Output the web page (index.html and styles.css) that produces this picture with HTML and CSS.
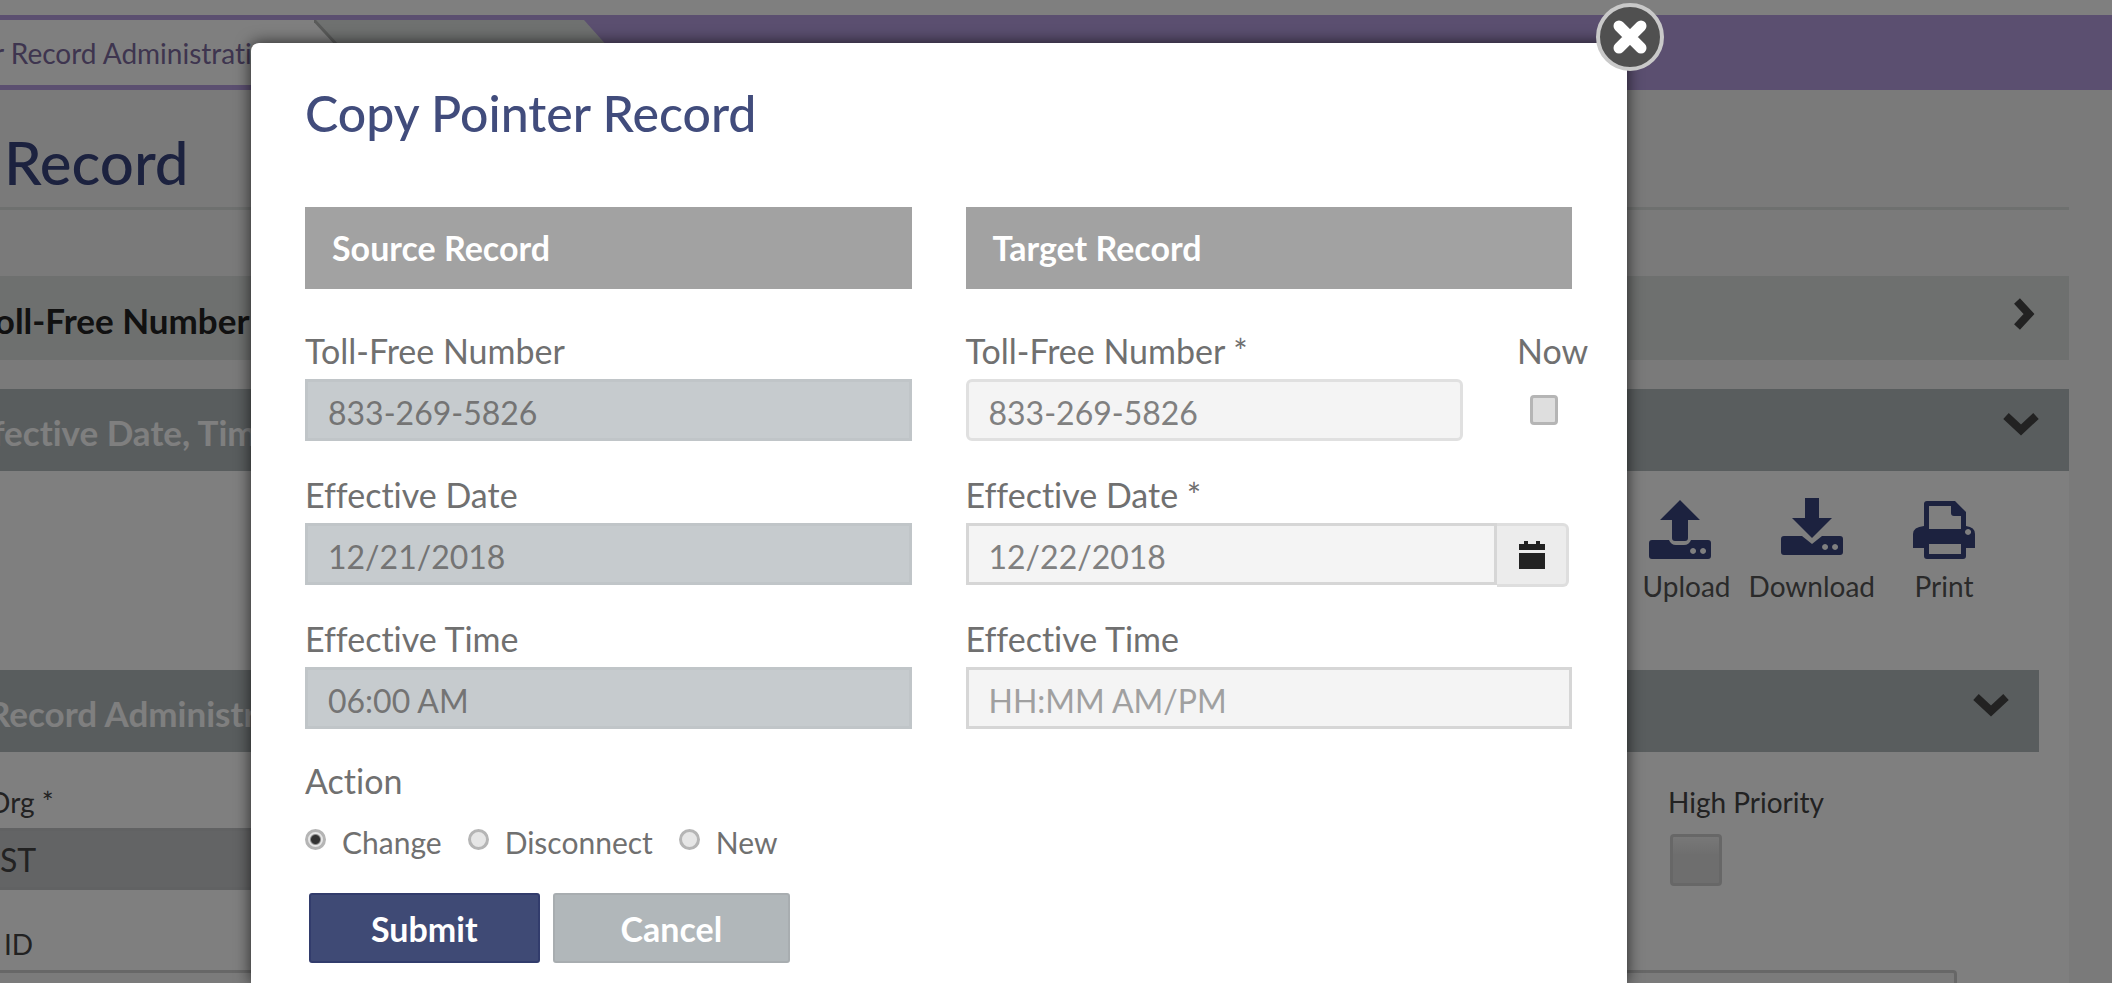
FILE: index.html
```html
<!DOCTYPE html>
<html lang="en">
<head>
<meta charset="utf-8">
<title>Copy Pointer Record</title>
<link rel="stylesheet" href="styles.css">
</head>
<body>
<div class="page">
  <nav class="tabs">
    <a class="tab" href="#">r Record Administration</a>
    <svg class="tab-next" viewBox="0 0 330 65" width="330" height="65" aria-hidden="true">
      <path d="M0 0H270L328 65H62Z" fill="#dfe3e1"/>
      <path d="M0 0L60 65" stroke="#b4b6b5" stroke-width="3"/>
    </svg>
  </nav>
  <main class="content">
    <h1 class="page-title">Record</h1>
    <section class="panel panel-light">
      <h2 class="panel-title">Toll-Free Number</h2>
      <svg class="chevron" viewBox="0 0 36 36" aria-hidden="true"><path d="M12 5L24 18L12 31" fill="none" stroke="currentColor" stroke-width="8"/></svg>
    </section>
    <section class="panel panel-dark">
      <h2 class="panel-title">Effective Date, Time</h2>
      <svg class="chevron" viewBox="0 0 36 36" aria-hidden="true"><path d="M3 11L18 25L33 11" fill="none" stroke="currentColor" stroke-width="8"/></svg>
    </section>
    <div class="panel-body">
      <div class="tools">
        <button class="tool tool-upload" type="button">
          <svg viewBox="0 0 62 62" width="62" height="62" aria-hidden="true"><path d="M31 2L51 22H39V40Q39 43 36 43H26Q23 43 23 40V22H11Z"/><path fill-rule="evenodd" d="M3 42H20Q22 47 27 47H35Q40 47 42 42H59Q62 42 62 45V58Q62 61 59 61H3Q0 61 0 58V45Q0 42 3 42ZM44 50a3 3 0 1 0 .1 0ZM54 50a3 3 0 1 0 .1 0Z"/></svg>
          <span>Upload</span>
        </button>
        <button class="tool" type="button">
          <svg viewBox="0 0 62 62" width="62" height="62" aria-hidden="true"><path d="M24 0H38V20H51L31 40L11 20H24Z"/><path fill-rule="evenodd" d="M3 38H21L31 46L41 38H59Q62 38 62 41V54Q62 57 59 57H3Q0 57 0 54V41Q0 38 3 38ZM44 46a3 3 0 1 0 .1 0ZM54 46a3 3 0 1 0 .1 0Z"/></svg>
          <span>Download</span>
        </button>
        <button class="tool" type="button">
          <svg viewBox="0 0 62 62" width="62" height="62" aria-hidden="true"><path fill-rule="evenodd" d="M14 3H42L53 14V28Q62 29 62 36V50H53V58Q53 61 50 61H14Q11 61 11 58V50H0V36Q0 29 11 28V6Q11 3 14 3ZM16 8V31H48V18H41Q38 18 38 15V8ZM16 46V56H48V46ZM55 31a3 3 0 1 0 .1 0Z"/></svg>
          <span>Print</span>
        </button>
      </div>
      <section class="panel panel-dark panel-nested">
        <h2 class="panel-title">Record Administration</h2>
        <svg class="chevron" viewBox="0 0 36 36" aria-hidden="true"><path d="M3 11L18 25L33 11" fill="none" stroke="currentColor" stroke-width="8"/></svg>
      </section>
      <div class="admin-row">
        <div class="admin-field">
          <label class="small-label" for="org">Org *</label>
          <input class="admin-input filled" id="org" type="text" value="ST" disabled>
        </div>
        <div class="priority">
          <label class="small-label" for="priority">High Priority</label>
          <input class="check check-large" id="priority" type="checkbox">
        </div>
      </div>
      <div class="admin-field wide">
        <label class="small-label id-label" for="recid">ID</label>
        <input class="admin-input" id="recid" type="text">
      </div>
    </div>
  </main>
</div>

<div class="overlay">
  <form class="dialog" role="dialog" aria-labelledby="dialog-title">
    <button class="close" type="button" aria-label="Close">
      <svg viewBox="0 0 36 36" width="36" height="36" aria-hidden="true"><path d="M7 7L29 29M29 7L7 29" stroke="#fff" stroke-width="11" stroke-linecap="round"/></svg>
    </button>
    <h2 class="dialog-title" id="dialog-title">Copy Pointer Record</h2>
    <div class="columns">
      <section class="column">
        <h3 class="column-title">Source Record</h3>
        <div class="field">
          <label for="s-num">Toll-Free Number</label>
          <input class="input locked" id="s-num" type="text" value="833-269-5826" disabled>
        </div>
        <div class="field">
          <label for="s-date">Effective Date</label>
          <input class="input locked" id="s-date" type="text" value="12/21/2018" disabled>
        </div>
        <div class="field">
          <label for="s-time">Effective Time</label>
          <input class="input locked" id="s-time" type="text" value="06:00 AM" disabled>
        </div>
      </section>
      <section class="column">
        <h3 class="column-title">Target Record</h3>
        <div class="number-row">
          <div class="field grow">
            <label for="t-num">Toll-Free Number *</label>
            <input class="input rounded" id="t-num" type="text" value="833-269-5826">
          </div>
          <div class="now">
            <label for="now">Now</label>
            <input class="check" id="now" type="checkbox">
          </div>
        </div>
        <div class="field">
          <label for="t-date">Effective Date *</label>
          <div class="date-group">
            <input class="input" id="t-date" type="text" value="12/22/2018">
            <button class="calendar" type="button" aria-label="Pick a date">
              <svg viewBox="0 0 26 28" width="26" height="28" aria-hidden="true"><path d="M0 3H5V0H9V3H17V0H21V3H26V9H0ZM0 12H26V28H0Z" fill="#222"/></svg>
            </button>
          </div>
        </div>
        <div class="field">
          <label for="t-time">Effective Time</label>
          <input class="input" id="t-time" type="text" placeholder="HH:MM AM/PM">
        </div>
      </section>
    </div>
    <fieldset class="action">
      <legend>Action</legend>
      <div class="options">
        <label class="option"><input class="radio" type="radio" name="action" checked>Change</label>
        <label class="option"><input class="radio" type="radio" name="action">Disconnect</label>
        <label class="option"><input class="radio" type="radio" name="action">New</label>
      </div>
    </fieldset>
    <div class="buttons">
      <button class="btn submit" type="submit">Submit</button>
      <button class="btn cancel" type="button">Cancel</button>
    </div>
  </form>
</div>
</body>
</html>
```

FILE: styles.css
```css
* {
  box-sizing: border-box;
}

html {
  overflow: hidden;
}

body {
  margin: 0;
  height: 100vh;
  overflow: hidden;
  position: relative;
  background: #f5f5f5;
  color: #222;
  font-family: Lato, "Open Sans", sans-serif;
  font-variant-ligatures: none;
}

input,
button {
  font-family: inherit;
}

h1, h2, h3 {
  margin: 0;
}

/* Page behind the dialog; its left part is scrolled out of view */
.page {
  height: 100vh;
  margin-left: -44px;
  border-top: 15px solid #fff;
  overflow: hidden;
}

.tabs {
  display: flex;
  height: 75px;
  padding: 5px 0;
  background: #b69ee0;
}

.tab {
  width: 358px;
  height: 70px;
  padding-left: 38px;
  border-bottom: 5px solid #b69ee0;
  background: #fff;
  color: #7c6a9e;
  font-size: 28px;
  line-height: 66px;
  white-space: nowrap;
  text-decoration: none;
}

.tab-next {
  flex: none;
  display: block;
  background: linear-gradient(to right, #fff 20%, transparent 20%);
}

.content {
  padding: 36px 43px 0 0;
}

.page-title {
  height: 84px;
  padding-left: 48px;
  border-bottom: 3px solid #dde1df;
  color: #38447f;
  font-size: 60px;
  font-weight: 500;
  line-height: 72px;
  margin-bottom: 66px;
}

.panel {
  display: flex;
  justify-content: space-between;
  height: 82px;
  padding: 16px 30px 0 4px;
}

.panel-light {
  height: 84px;
  padding: 20px 28px 0 22px;
  margin-bottom: 29px;
  background: #dde1df;
}

.panel-dark {
  background: #b2babc;
}

.panel-nested {
  padding-left: 32px;
}

.panel-title {
  font-size: 35px;
  font-weight: 700;
  line-height: 48px;
  white-space: nowrap;
}

.panel-dark .panel-title {
  color: #fff;
  line-height: 54px;
}

.chevron {
  width: 36px;
  height: 36px;
  color: #444;
}

.panel-body {
  padding: 27px 30px 0 0;
  background: #fff;
}

.tools {
  display: flex;
  justify-content: flex-end;
  height: 172px;
  padding-right: 64px;
  gap: 14px;
}

.tool {
  display: flex;
  flex-direction: column;
  align-items: center;
  gap: 8px;
  padding: 0;
  border: 0;
  background: none;
  color: #555;
  font-size: 28px;
  line-height: 36px;
}

.tool-upload {
  align-items: flex-start;
  margin-right: 4px;
}

.tool-upload svg {
  margin-left: 6px;
}

.tool:last-child {
  margin-left: 24px;
}

.tool svg {
  fill: #38447f;
}

.admin-row {
  display: flex;
  justify-content: space-between;
  padding-top: 32px;
}

.admin-field {
  display: flex;
  flex-direction: column;
  width: 400px;
  gap: 8px;
}

.wide {
  width: auto;
  margin: 36px 82px 0 0;
}

.small-label {
  padding-left: 32px;
  color: #444;
  font-size: 28px;
  line-height: 36px;
}

.id-label {
  padding-left: 48px;
}

.admin-input {
  width: 100%;
  height: 62px;
  padding: 0 41px;
  border: 3px solid #cfcfcf;
  border-radius: 4px;
  background: #f7f7f7;
  color: #444;
  font-size: 32px;
}

.filled {
  border-color: #c2c4c6;
  background: #c7c9cb;
}

.priority {
  display: flex;
  flex-direction: column;
  width: 371px;
  gap: 14px;
}

.priority .small-label {
  padding-left: 0;
}

.check {
  appearance: none;
  width: 28px;
  height: 30px;
  margin: 0;
  border: 3px solid #b5b5b5;
  border-radius: 4px;
  background: #dedede;
}

.check-large {
  width: 52px;
  height: 52px;
  margin-left: 2px;
  border-color: #cfcfcf;
  background: linear-gradient(#f0f0f0, #dcdcdc 40%);
}

/* Dialog */
.overlay {
  position: absolute;
  inset: 0;
  display: flex;
  padding: 43px 485px 0 251px;
  background: rgba(0, 0, 0, 0.5);
}

.dialog {
  position: relative;
  flex: 1;
  padding: 36px 55px 0 54px;
  border-radius: 8px 8px 0 0;
  background: #fff;
  box-shadow: 0 0 16px rgba(0, 0, 0, 0.7);
  color: #707070;
  font-size: 34px;
  line-height: 40px;
}

.close {
  position: absolute;
  top: -40px;
  right: -37px;
  display: flex;
  align-items: center;
  justify-content: center;
  width: 68px;
  height: 68px;
  padding: 0;
  border: 4px solid #c9c9c9;
  border-radius: 50%;
  background: #505050;
}

.dialog-title {
  margin-bottom: 60px;
  color: #414c7c;
  font-size: 50px;
  font-weight: 500;
  line-height: 68px;
}

.columns {
  display: grid;
  grid-template-columns: 1fr 1fr;
  gap: 54px;
}

.column-title {
  margin-bottom: 42px;
  padding: 0 27px;
  background: #a2a2a2;
  color: #fff;
  font-size: 34px;
  line-height: 82px;
}

.field {
  display: flex;
  flex-direction: column;
  gap: 8px;
  margin-bottom: 34px;
}

.grow {
  flex: 1;
}

.input {
  width: 100%;
  height: 62px;
  padding: 4px 20px 0;
  border: 3px solid #d6d6d6;
  border-radius: 0;
  background: #f4f4f4;
  color: #808080;
  font-size: 32px;
}

.input::placeholder {
  color: #a0a0a0;
}

.locked {
  border-color: #c0c5c8;
  background: #c6cbce;
  color: #747474;
}

.rounded {
  border-radius: 6px;
  border-color: #e0e0e0;
}

.number-row {
  display: flex;
  gap: 54px;
}

.now {
  display: flex;
  flex-direction: column;
  gap: 24px;
  width: 72px;
  margin-right: -17px;
}

.now .check {
  margin-left: 13px;
}

.date-group {
  display: flex;
  height: 62px;
  padding-right: 3px;
}

.calendar {
  flex: none;
  display: flex;
  align-items: center;
  justify-content: center;
  width: 72px;
  height: 64px;
  border: 3px solid #dedede;
  border-left: 0;
  border-radius: 0 6px 6px 0;
  background: #ececec;
}

.action {
  margin: -2px 0 0;
  padding: 0;
  border: 0;
}

.action legend {
  padding: 0;
  margin-bottom: 21px;
}

.options {
  display: flex;
  gap: 26px;
  font-size: 30px;
}

.option {
  display: flex;
  gap: 16px;
}

.radio {
  appearance: none;
  width: 21px;
  height: 21px;
  margin: 7px 0 0;
  border: 3px solid #b5b5b5;
  border-radius: 50%;
  background: #e6e6e6;
}

.radio:checked {
  background: radial-gradient(#333 4px, #e6e6e6 6px);
}

.buttons {
  display: flex;
  gap: 13px;
  padding: 31px 4px 0;
}

.btn {
  height: 70px;
  padding: 0 60px;
  border: 2px solid #a8adb0;
  border-radius: 3px;
  background: #b1b7ba;
  color: #fff;
  font-size: 34px;
  font-weight: 700;
}

.cancel {
  padding: 0 66px;
}

.submit {
  border-color: #323c6c;
  background: #3f4a75;
}
```
